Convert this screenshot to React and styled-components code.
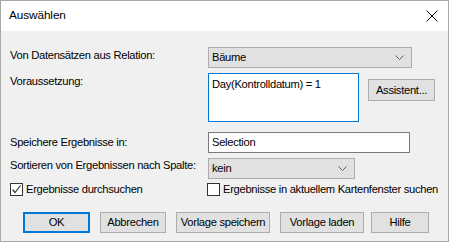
import React from 'react';
import styled, {createGlobalStyle, css} from 'styled-components';

const Global = createGlobalStyle`
html, body {
  margin: 0;
  padding: 0;
  background: #f0f0f0;
}
* { box-sizing: border-box; }
`;

const Dialog = styled.div`
width: 449px;
height: 242px;
border: 1px solid #a8a8a8;
background: #f0f0f0;
font-family: "Liberation Sans", Arial, sans-serif;
font-size: 11.2px;
letter-spacing: -0.3px;
color: #000;
display: flex;
flex-direction: column;
`;

const TitleBar = styled.div`
height: 30px;
background: #fff;
display: flex;
align-items: center;
justify-content: space-between;
padding: 0 9px 0 8px;
`;

const Title = styled.div`
font-size: 11.8px;
letter-spacing: -0.1px;
padding-bottom: 2px;
`;

const Close = styled.div`
width: 12px;
height: 12px;
margin-right: 1px;
margin-bottom: 1px;
`;

const Body = styled.div`
flex: 1;
display: flex;
flex-direction: column;
padding: 16px 0 0 9px;
`;

const Row = styled.div`
display: grid;
grid-template-columns: 198px auto;
margin-top: ${({top}) => top || 0}px;
`;

const Label = styled.div`
line-height: 14px;
padding-top: ${({offset}) => offset || 0}px;
white-space: nowrap;
`;

const field = css`
height: 21px;
font: inherit;
line-height: 19px;
padding: 0 0 0 3px;
`;

const Select = styled.div`
${field};
width: ${({w}) => w}px;
background: #e1e1e1;
border: 1px solid #adadad;
display: flex;
align-items: center;
justify-content: space-between;
padding-right: 7px;
`;

const Input = styled.div`
${field};
width: ${({w}) => w}px;
background: #fff;
border: 1px solid #7a7a7a;
`;

const Condition = styled.div`
display: flex;
align-items: flex-start;
gap: 9px;
`;

const TextArea = styled.div`
width: 151px;
height: 49px;
background: #fff;
border: 1px solid #0078d7;
padding: 3px 0 0 3px;
line-height: 14px;
`;

const Button = styled.div`
width: ${({w}) => w}px;
height: ${({h}) => h || 21}px;
margin-top: ${({mt}) => mt || 0}px;
margin-left: ${({ml}) => ml || 0}px;
background: #e1e1e1;
border: ${({primary}) => primary ? '2px solid #0078d7' : '1px solid #adadad'};
display: flex;
align-items: center;
justify-content: center;
padding-bottom: 1px;
`;

const Checks = styled.div`
display: flex;
margin-top: 4px;
`;

const Check = styled.div`
display: flex;
align-items: center;
gap: 3px;
width: ${({w}) => w ? w + 'px' : 'auto'};
line-height: 13px;
`;

const Box = styled.div`
width: 13px;
height: 13px;
border: 1px solid #333;
background: #fff;
display: flex;
align-items: center;
justify-content: center;
`;

const Buttons = styled.div`
display: flex;
margin: 16px 0 0 13px;
`;

const Chevron = () => (
    <svg width="9" height="5" viewBox="0 0 9 5">
        <path d="M0.5 0.5 L4.5 4.5 L8.5 0.5" fill="none" stroke="#606060" strokeWidth="1"/>
    </svg>
);

const Tick = () => (
    <svg width="11" height="11" viewBox="0 0 11 11">
        <path d="M1.5 5.5 L4 8.5 L9.5 1.5" fill="none" stroke="#333" strokeWidth="1.2"/>
    </svg>
);

export default () => {
    return <>
        <Global/>
        <Dialog>
            <TitleBar>
                <Title>Auswählen</Title>
                <Close>
                    <svg width="12" height="12" viewBox="0 0 12 12">
                        <path d="M0.5 0.5 L11.5 11.5 M11.5 0.5 L0.5 11.5" stroke="#000" strokeWidth="1"/>
                    </svg>
                </Close>
            </TitleBar>
            <Body>
                <Row>
                    <Label offset={1}>Von Datensätzen aus Relation:</Label>
                    <Select w={204}>Bäume <Chevron/></Select>
                </Row>
                <Row top={5}>
                    <Label offset={1}>Voraussetzung:</Label>
                    <Condition>
                        <TextArea>Day(Kontrolldatum) = 1</TextArea>
                        <Button w={67} h={22} mt={6}>Assistent...</Button>
                    </Condition>
                </Row>
                <Row top={10}>
                    <Label offset={3}>Speichere Ergebnisse in:</Label>
                    <Input w={202}>Selection</Input>
                </Row>
                <Row top={5}>
                    <Label offset={0}>Sortieren von Ergebnissen nach Spalte:</Label>
                    <Select w={147}>kein <Chevron/></Select>
                </Row>
                <Checks>
                    <Check w={197}><Box><Tick/></Box>Ergebnisse durchsuchen</Check>
                    <Check><Box/>Ergebnisse in aktuellem Kartenfenster suchen</Check>
                </Checks>
                <Buttons>
                    <Button w={67} primary>OK</Button>
                    <Button w={66} ml={10}>Abbrechen</Button>
                    <Button w={94} ml={10}>Vorlage speichern</Button>
                    <Button w={84} ml={10}>Vorlage laden</Button>
                    <Button w={58} ml={7}>Hilfe</Button>
                </Buttons>
            </Body>
        </Dialog>
    </>;
}
